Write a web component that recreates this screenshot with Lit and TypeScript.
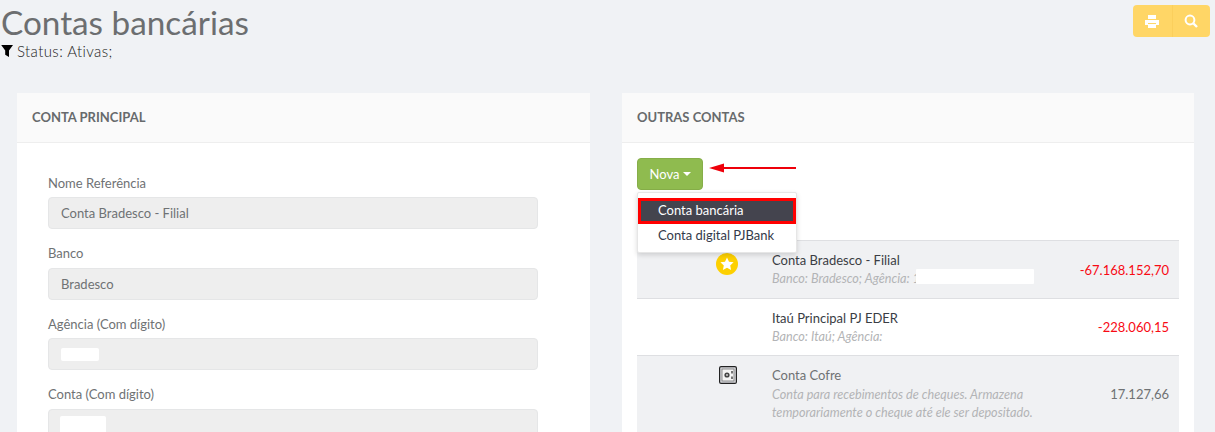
import { LitElement, html, css } from "lit";
import { customElement } from "lit/decorators.js";

@customElement("app-root")
export class AppRoot extends LitElement {
  static styles = css`
    :host { display: block; height: 432px; overflow: hidden; background: #f0f2f5; font-family: Lato, sans-serif; color: #676a6c; font-size: 13px; }
    * { box-sizing: border-box; }
    .top { display: flex; justify-content: space-between; height: 93px; padding-left: 1px; }
    h1 { margin: 0; font-size: 33.3px; line-height: 45px; height: 45px; color: #6c6e70; font-weight: 400; }
    .status { display: flex; align-items: center; gap: 3px; color: #222; font-size: 15px; line-height: 16px; letter-spacing: .4px; font-weight: 300; margin-top: -2px; }
    .btns { display: flex; height: 32px; margin: 5px 5px 0 0; border-radius: 4px; overflow: hidden; background: #ffd666; }
    .btns div { width: 38.5px; display: flex; align-items: center; justify-content: center; }
    .btns div + div { border-left: 1px solid #fbcf5c; }
    .cols { display: grid; grid-template-columns: 573px 572px; gap: 32px; padding-left: 17px; }
    .panel { background: #fff; height: 400px; }
    .phead { height: 50px; background: #fafafa; border-bottom: 1px solid #eeeeee; padding: 0 15px 1px; display: flex; align-items: center; font-weight: 700; font-size: 13px; color: #676a6c; }
    .form { padding: 30.9px 52px 0 31px; }
    .field { height: 70.5px; }
    .field label { display: block; line-height: 18px; margin-bottom: 5.2px; color: #6f7274; }
    .input { height: 32px; background: #eeeeee; border: 1px solid #e5e6e7; border-radius: 4px; padding: 0 12px; display: flex; align-items: center; color: #6f7274; }
    .input.top-align { align-items: flex-start; }
    .mask { display: block; background: #fff; border-radius: 2px; }
    .m1 { width: 38px; height: 13px; }
    .m2 { width: 46px; height: 24px; margin-top: 6px; margin-left: -1px; }
    .body { padding: 15px; position: relative; }
    .new { width: 66px; height: 32px; background: #8fbb4f; border: 1px solid #86ae49; border-radius: 4px; color: #fff; display: flex; align-items: center; justify-content: center; gap: 4px; padding-left: 1px; }
    .caret { width: 0; height: 0; border-left: 4px solid transparent; border-right: 4px solid transparent; border-top: 4px solid #fff; }
    .menu { position: absolute; left: 15px; top: 49px; width: 160px; height: 61px; background: #fff; border: 1px solid #e6e6e6; box-shadow: 0 2px 5px rgba(0,0,0,.15); border-radius: 2px; z-index: 2; padding: 5px 0 0 0; color: #333a4a; }
    .item { height: 21px; display: flex; align-items: center; padding-left: 20px; width: 158px; }
    .item.active { background: #44444e; color: #fff; border: 3px solid #f00; padding: 0 0 2px 17px; height: 26px; }
    .arrow { position: absolute; left: 87px; top: 19px; z-index: 2; }
    .table { margin-top: 50px; width: 542px; }
    .row { display: grid; grid-template-columns: 135px 1fr auto; border-top: 1px solid #dedfe2; padding-right: 10px; }
    .row.a { background: #f0f1f3; height: 58px; }
    .row.b { background: #fff; height: 57px; }
    .row.c { background: #f0f1f3; height: 90px; }
    .icon { display: flex; justify-content: flex-end; padding: 12px 34px 0 0; }
    .row.c .icon { padding: 10px 35px 0 0; }
    .name { color: #3a3d44; line-height: 18px; padding-top: 10px; }
    .row.c .name { color: #6f7274; }
    .sub { font-style: italic; color: #b3b4b6; font-size: 12.65px; line-height: 18px; margin-top: 1px; }
    .row.c .sub { margin-top: 2px; }
    .money { line-height: 18px; padding-top: 20px; color: #f80a14; }
    .row.b .money { padding-top: 19px; }
    .row.c .money { color: #6f7274; padding-top: 29px; }
    .hide { display: inline-block; vertical-align: top; background: #fff; width: 118px; height: 15px; margin-left: -4px; margin-top: -1px; border-radius: 1px; }
  `;

  render() {
    return html`
      <div class="top">
        <div>
          <h1>Contas bancárias</h1>
          <div class="status">
            <svg width="13" height="12" viewBox="0 0 13 12"><path d="M0.2 0h11.8L8 5.6V12L4.2 9.8V5.6z" fill="#000"/></svg>
            <span>Status: Ativas;</span>
          </div>
        </div>
        <div class="btns">
          <div>
            <svg width="14" height="13" viewBox="0 0 14 13" fill="#fff"><path d="M3 0h8v4H3z"/><path d="M0 5h14v5h-3V8H3v2H0z"/><path d="M3 9h8v4H3z"/></svg>
          </div>
          <div>
            <svg width="14" height="14" viewBox="0 0 14 14" fill="none" stroke="#fff"><circle cx="6" cy="6" r="4.4" stroke-width="2"/><path d="M9.5 9.5L13 13" stroke-width="2.4"/></svg>
          </div>
        </div>
      </div>
      <div class="cols">
        <section class="panel">
          <div class="phead">CONTA PRINCIPAL</div>
          <div class="form">
            <div class="field"><label>Nome Referência</label><div class="input">Conta Bradesco - Filial</div></div>
            <div class="field"><label>Banco</label><div class="input">Bradesco</div></div>
            <div class="field"><label>Agência (Com dígito)</label><div class="input"><span class="mask m1"></span></div></div>
            <div class="field"><label>Conta (Com dígito)</label><div class="input top-align"><span class="mask m2"></span></div></div>
          </div>
        </section>
        <section class="panel">
          <div class="phead">OUTRAS CONTAS</div>
          <div class="body">
            <div class="new">Nova <span class="caret"></span></div>
            <svg class="arrow" width="88" height="12" viewBox="0 0 88 12"><path d="M0 6L15 1.5V5H87V7H15V10.5z" fill="#ee000a"/></svg>
            <div class="menu">
              <div class="item active">Conta bancária</div>
              <div class="item">Conta digital PJBank</div>
            </div>
            <div class="table">
              <div class="row a">
                <div class="icon">
                  <svg width="22" height="22" viewBox="0 0 22 22"><circle cx="11" cy="11" r="11" fill="#fdd000"/><path d="M11 4.5l2 4.2 4.6.6-3.4 3.1.9 4.6-4.1-2.3-4.1 2.3.9-4.6-3.4-3.1 4.6-.6z" fill="#fff"/></svg>
                </div>
                <div>
                  <div class="name">Conta Bradesco - Filial</div>
                  <div class="sub">Banco: Bradesco; Agência: 1<span class="hide"></span></div>
                </div>
                <div class="money">-67.168.152,70</div>
              </div>
              <div class="row b">
                <div class="icon"></div>
                <div>
                  <div class="name">Itaú Principal PJ EDER</div>
                  <div class="sub">Banco: Itaú; Agência:</div>
                </div>
                <div class="money">-228.060,15</div>
              </div>
              <div class="row c">
                <div class="icon">
                  <svg width="18" height="18" viewBox="0 0 18 18" fill="none"><rect x=".6" y=".6" width="16.8" height="16.8" rx="1.5" fill="#d8d9dc" stroke="#222" stroke-width="1.2"/><rect x="3" y="3" width="12" height="12" fill="#f4f4f4" stroke="#777" stroke-width=".8"/><circle cx="8" cy="9" r="2.6" fill="#444"/><circle cx="8" cy="9" r=".9" fill="#ddd"/><path d="M13 5v2.5M13 10.5V13" stroke="#222" stroke-width="1.2"/></svg>
                </div>
                <div>
                  <div class="name">Conta Cofre</div>
                  <div class="sub">Conta para recebimentos de cheques. Armazena<br />temporariamente o cheque até ele ser depositado.</div>
                </div>
                <div class="money">17.127,66</div>
              </div>
            </div>
          </div>
        </section>
      </div>
    `;
  }
}
